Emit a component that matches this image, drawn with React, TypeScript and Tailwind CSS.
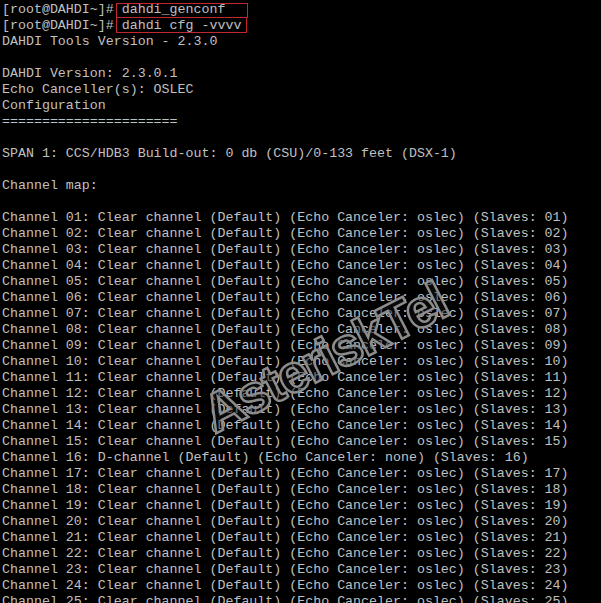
const header: string[] = [
  "[root@DAHDI~]# dahdi_genconf",
  "[root@DAHDI~]# dahdi cfg -vvvv",
  "DAHDI Tools Version - 2.3.0",
  "",
  "DAHDI Version: 2.3.0.1",
  "Echo Canceller(s): OSLEC",
  "Configuration",
  "======================",
  "",
  "SPAN 1: CCS/HDB3 Build-out: 0 db (CSU)/0-133 feet (DSX-1)",
  "",
  "Channel map:",
  "",
];

function channelLine(n: number) {
  const nn = String(n).padStart(2, "0");
  if (n === 16) {
    return `Channel ${nn}: D-channel (Default) (Echo Canceler: none) (Slaves: ${nn})`;
  }
  return `Channel ${nn}: Clear channel (Default) (Echo Canceler: oslec) (Slaves: ${nn})`;
}

const lines = [
  ...header,
  ...Array.from({ length: 27 }, (_, i) => channelLine(i + 1)),
];

export default function App() {
  return (
    <div className="relative w-full h-screen overflow-hidden bg-black">
      <pre className="pl-[2px] pt-[2px] font-['Liberation_Mono','Courier_New',monospace] text-[13.3px] leading-[16px] text-[#c0c0c0] whitespace-pre">
        {lines.map((l, i) => (
          <div key={i} className="h-[16px]">
            {l || " "}
          </div>
        ))}
      </pre>

      {/* highlighted commands */}
      <div className="absolute left-[116px] top-[3px] w-[132px] h-[15px] border border-[#c0282d]" />
      <div className="absolute left-[116px] top-[17px] w-[131px] h-[16px] border border-[#c0282d]" />

      {/* watermark */}
      <div className="absolute left-[192px] top-[330px] origin-center -rotate-[27deg] font-['Liberation_Sans',Arial,sans-serif] font-bold text-[54px] leading-none tracking-[-2px] text-[rgba(20,20,20,0.45)] [-webkit-text-stroke:2.5px_#8c8c8c] select-none pointer-events-none">
        AsteriskTel
      </div>
    </div>
  );
}
